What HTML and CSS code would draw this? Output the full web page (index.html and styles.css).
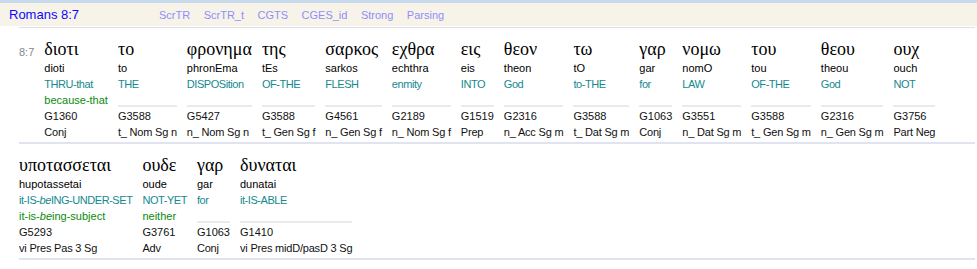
FILE: index.html
```html
<!DOCTYPE html>
<html>
<head>
<meta charset="utf-8">
<link rel="stylesheet" href="styles.css">
</head>
<body>
<div class="topbar">
  <span class="ref">Romans 8:7</span>
  <nav class="links">
    <a>ScrTR</a><a>ScrTR_t</a><a>CGTS</a><a>CGES_id</a><a>Strong</a><a>Parsing</a>
  </nav>
</div>
<div class="rule"></div>

<div class="line">
  <div class="vnum">8:7</div>
  <div class="w"><div class="gk">διοτι</div><div class="tr">dioti</div><div class="en">THRU-that</div><div class="en2">because-that</div><div class="st">G1360</div><div class="pa">Conj</div></div>
  <div class="w"><div class="gk">το</div><div class="tr">to</div><div class="en">THE</div><div class="en2 empty"></div><div class="st">G3588</div><div class="pa">t_ Nom Sg n</div></div>
  <div class="w"><div class="gk">φρονημα</div><div class="tr">phronEma</div><div class="en">DISPOSition</div><div class="en2 empty"></div><div class="st">G5427</div><div class="pa">n_ Nom Sg n</div></div>
  <div class="w"><div class="gk">της</div><div class="tr">tEs</div><div class="en">OF-THE</div><div class="en2 empty"></div><div class="st">G3588</div><div class="pa">t_ Gen Sg f</div></div>
  <div class="w"><div class="gk">σαρκος</div><div class="tr">sarkos</div><div class="en">FLESH</div><div class="en2 empty"></div><div class="st">G4561</div><div class="pa">n_ Gen Sg f</div></div>
  <div class="w"><div class="gk">εχθρα</div><div class="tr">echthra</div><div class="en">enmity</div><div class="en2 empty"></div><div class="st">G2189</div><div class="pa">n_ Nom Sg f</div></div>
  <div class="w"><div class="gk">εις</div><div class="tr">eis</div><div class="en">INTO</div><div class="en2 empty"></div><div class="st">G1519</div><div class="pa">Prep</div></div>
  <div class="w"><div class="gk">θεον</div><div class="tr">theon</div><div class="en">God</div><div class="en2 empty"></div><div class="st">G2316</div><div class="pa">n_ Acc Sg m</div></div>
  <div class="w"><div class="gk">τω</div><div class="tr">tO</div><div class="en">to-THE</div><div class="en2 empty"></div><div class="st">G3588</div><div class="pa">t_ Dat Sg m</div></div>
  <div class="w"><div class="gk">γαρ</div><div class="tr">gar</div><div class="en">for</div><div class="en2 empty"></div><div class="st">G1063</div><div class="pa">Conj</div></div>
  <div class="w"><div class="gk">νομω</div><div class="tr">nomO</div><div class="en">LAW</div><div class="en2 empty"></div><div class="st">G3551</div><div class="pa">n_ Dat Sg m</div></div>
  <div class="w"><div class="gk">του</div><div class="tr">tou</div><div class="en">OF-THE</div><div class="en2 empty"></div><div class="st">G3588</div><div class="pa">t_ Gen Sg m</div></div>
  <div class="w"><div class="gk">θεου</div><div class="tr">theou</div><div class="en">God</div><div class="en2 empty"></div><div class="st">G2316</div><div class="pa">n_ Gen Sg m</div></div>
  <div class="w"><div class="gk">ουχ</div><div class="tr">ouch</div><div class="en">NOT</div><div class="en2 empty"></div><div class="st">G3756</div><div class="pa">Part Neg</div></div>
</div>

<div class="line">
  <div class="w"><div class="gk">υποτασσεται</div><div class="tr">hupotassetai</div><div class="en">it-IS-<i>be</i>ING-UNDER-SET</div><div class="en2">it-is-<i>be</i>ing-subject</div><div class="st">G5293</div><div class="pa">vi Pres Pas 3 Sg</div></div>
  <div class="w"><div class="gk">ουδε</div><div class="tr">oude</div><div class="en">NOT-YET</div><div class="en2">neither</div><div class="st">G3761</div><div class="pa">Adv</div></div>
  <div class="w"><div class="gk">γαρ</div><div class="tr">gar</div><div class="en">for</div><div class="en2 empty"></div><div class="st">G1063</div><div class="pa">Conj</div></div>
  <div class="w"><div class="gk">δυναται</div><div class="tr">dunatai</div><div class="en">it-IS-ABLE</div><div class="en2 empty"></div><div class="st">G1410</div><div class="pa">vi Pres midD/pasD 3 Sg</div></div>
</div>
</body>
</html>
```
FILE: styles.css
```css
html, body {
  margin: 0;
  padding: 0;
  background: #fff;
}
body {
  font-family: "Liberation Sans", Arial, sans-serif;
  font-size: 11px;
  color: #000;
}
.topbar {
  display: flex;
  align-items: baseline;
  height: 23px;
  border-top: 3px solid #c8dbee;
  background: #f7f3e8;
  padding-left: 9px;
}
.ref {
  width: 150px;
  font-size: 13px;
  line-height: 23px;
  color: #0a0aff;
}
.links {
  display: flex;
  gap: 13.5px;
  font-size: 11px;
}
.links a {
  color: #8e8eff;
}
.rule {
  height: 1px;
  margin: 1px 2px 0 19px;
  background: #dcdfea;
}
.line {
  display: flex;
  gap: 10px;
  margin: 0 2px 0 19px;
  padding: 10px 0 2px;
  border-bottom: 2px solid #e0e4f0;
}
.vnum {
  color: #888;
  line-height: 22px;
  padding-top: 3px;
}
.w {
  display: flex;
  flex-direction: column;
  line-height: 16px;
  white-space: nowrap;
}
.gk {
  font-family: "Liberation Serif", "DejaVu Serif", serif;
  font-size: 18px;
  line-height: 22px;
}
.en {
  color: #14898f;
  letter-spacing: -0.45px;
}
.en2 {
  color: #0c8a0c;
  height: 16px;
}
.en2.empty {
  height: 13px;
  border-bottom: 2px solid #e6ece6;
  margin-bottom: 1px;
}
.st, .pa {
  color: #111;
}
.pa {
  letter-spacing: -0.2px;
}
```
